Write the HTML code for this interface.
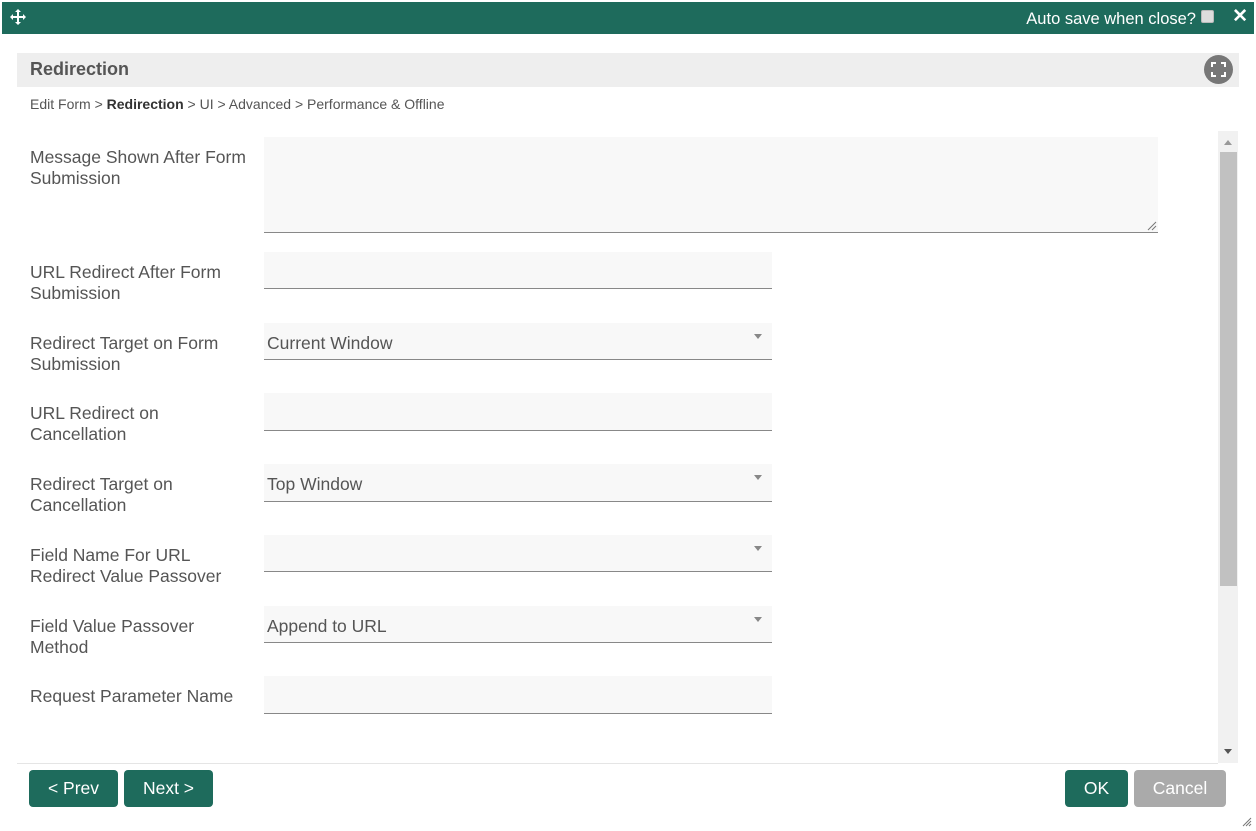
<!DOCTYPE html>
<html><head><style>
body{margin:0;width:1256px;height:831px;background:#fff;font-family:"Liberation Sans",sans-serif;position:relative;overflow:hidden}
.a{position:absolute}
.top{left:2px;top:2px;width:1252px;height:32px;background:#1e6b5c;color:#fff}
.lbl{position:absolute;left:30px;font-size:17.5px;color:#555;line-height:21px;width:220px}
.in{position:absolute;left:264px;width:508px;height:37px;background:#f8f8f8;border-bottom:1px solid #888;box-sizing:border-box;font-size:17.5px;color:#555;padding:10px 0 0 3px}
.arr{position:absolute;right:10px;top:11px;width:0;height:0;border-left:4px solid transparent;border-right:4px solid transparent;border-top:5px solid #888}
.btn{position:absolute;top:770px;height:37px;border-radius:4px;color:#fff;font-size:17.5px;text-align:center;line-height:37px}
</style></head><body>
<div class="a top">
<svg class="a" style="left:8px;top:7px" width="16" height="16" viewBox="0 0 16 16" fill="#fff"><path d="M8 0l3 3H9v4h4V5l3 3-3 3V9H9v4h2l-3 3-3-3h2V9H3v2L0 8l3-3v2h4V3H5z"/></svg>
<div class="a" style="right:58px;top:8px;font-size:16.5px">Auto save when close?</div>
<div class="a" style="right:40px;top:8px;width:11px;height:11px;background:#ddd;border:1px solid #bbb;border-radius:2px"></div>
<div class="a" style="right:6px;top:3px;font-size:19px;font-weight:bold">✕</div>
</div>
<div class="a" style="left:17px;top:53px;width:1222px;height:34px;background:#eee"></div>
<div class="a" style="left:30px;top:59px;font-size:18px;font-weight:bold;color:#555">Redirection</div>
<div class="a" style="left:1204px;top:55px;width:29px;height:29px;border-radius:50%;background:#777"></div>
<svg class="a" style="left:1210px;top:61px" width="17" height="17" viewBox="0 0 17 17" fill="none" stroke="#fff" stroke-width="2"><path d="M2 6V2h4M11 2h4v4M15 11v4h-4M6 15H2v-4"/></svg>
<div class="a" style="left:30px;top:96px;font-size:14px;color:#555">Edit Form &gt; <b style="color:#333">Redirection</b> &gt; UI &gt; Advanced &gt; Performance &amp; Offline</div>

<div class="a" style="left:1218px;top:131px;width:20px;height:632px;background:#f1f1f1"></div>
<div class="a" style="left:1220px;top:152px;width:17px;height:434px;background:#c1c1c1"></div>
<div class="a" style="left:1224px;top:140px;border-left:4px solid transparent;border-right:4px solid transparent;border-bottom:5px solid #999"></div>
<div class="a" style="left:1224px;top:749px;border-left:4px solid transparent;border-right:4px solid transparent;border-top:5px solid #555"></div>
<div class="a" style="left:17px;top:763px;width:1201px;height:1px;background:#e5e5e5"></div>

<div class="lbl" style="top:147px">Message Shown After Form Submission</div>
<div class="in" style="top:137px;width:894px;height:96px"></div>
<svg class="a" style="left:1147px;top:221px" width="10" height="10" stroke="#777"><path d="M1 9L9 1M5 9L9 5"/></svg>
<div class="lbl" style="top:262px">URL Redirect After Form Submission</div>
<div class="in" style="top:252px"></div>
<div class="lbl" style="top:333px">Redirect Target on Form Submission</div>
<div class="in" style="top:323px">Current Window<div class="arr"></div></div>
<div class="lbl" style="top:403px">URL Redirect on Cancellation</div>
<div class="in" style="top:393px;height:38px"></div>
<div class="lbl" style="top:474px">Redirect Target on Cancellation</div>
<div class="in" style="top:464px;height:38px">Top Window<div class="arr"></div></div>
<div class="lbl" style="top:545px">Field Name For URL Redirect Value Passover</div>
<div class="in" style="top:535px"><div class="arr"></div></div>
<div class="lbl" style="top:616px">Field Value Passover Method</div>
<div class="in" style="top:606px">Append to URL<div class="arr"></div></div>
<div class="lbl" style="top:686px">Request Parameter Name</div>
<div class="in" style="top:676px;height:38px"></div>

<div class="btn" style="left:29px;width:89px;background:#1e6b5c">&lt; Prev</div>
<div class="btn" style="left:124px;width:89px;background:#1e6b5c">Next &gt;</div>
<div class="btn" style="left:1065px;width:63px;background:#1e6b5c">OK</div>
<div class="btn" style="left:1134px;width:92px;background:#aaa">Cancel</div>
<svg class="a" style="left:1242px;top:817px" width="10" height="10" stroke="#777"><path d="M1 9L9 1M4 9L9 4M7 9L9 7"/></svg>
</body></html>
